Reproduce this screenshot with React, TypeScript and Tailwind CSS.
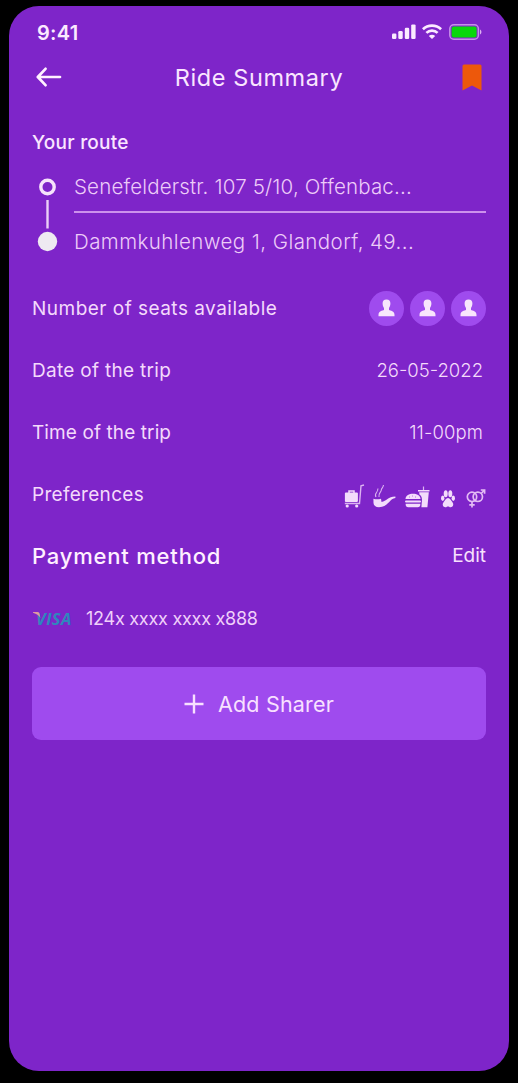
const StatusIcons = () => (
  <div className="flex items-center">
    <svg width="24" height="16" viewBox="0 0 24 16" fill="#fbeaff">
      <rect x="0" y="9.5" width="4.4" height="5.5" rx="1.2" />
      <rect x="6.3" y="7" width="4.4" height="8" rx="1.2" />
      <rect x="12.8" y="3.7" width="4.4" height="11.3" rx="1.2" />
      <rect x="19.2" y="0.4" width="4.4" height="14.6" rx="1.2" />
    </svg>
    <svg
      className="ml-[6px]"
      width="20"
      height="16"
      viewBox="0 0 20 16"
      fill="none"
      stroke="#fbeaff"
      strokeWidth="2.7"
    >
      <path d="M0.9 5.2C5.9 0.3 14.1 0.3 19.1 5.2" />
      <path d="M4.4 8.9C7.5 5.9 12.5 5.9 15.6 8.9" />
      <path
        d="M10 15L6.8 11.9C8.7 10.2 11.3 10.2 13.2 11.9Z"
        fill="#fbeaff"
        stroke="none"
      />
    </svg>
    <svg className="ml-[7px]" width="33" height="16" viewBox="0 0 33 16">
      <rect
        x="0.8"
        y="0.8"
        width="28.6"
        height="14.4"
        rx="4"
        fill="none"
        stroke="#c78fe9"
        strokeWidth="1.5"
      />
      <rect x="2.6" y="2.5" width="25" height="11" rx="2" fill="#08d70b" />
      <path d="M31 5.5C32.9 6.3 32.9 9.7 31 10.5Z" fill="#dcb0f2" />
    </svg>
  </div>
);

const Person = () => (
  <div className="flex h-[35px] w-[35px] items-center justify-center rounded-full bg-[#9f4bee]">
    <svg width="17" height="18" viewBox="0 0 17 18" fill="#f8e6fc">
      <path d="M8.5 0.5C11.2 0.5 12.4 2 12.4 4.3C12.4 6.4 11.8 8 11 9V11C12.5 11.8 16.5 12 16.5 15.8V17.2H0.5V15.8C0.5 12 4.5 11.8 6 11V9C5.2 8 4.6 6.4 4.6 4.3C4.6 2 5.8 0.5 8.5 0.5Z" />
    </svg>
  </div>
);

const Luggage = () => (
  <svg width="21" height="24" viewBox="0 0 21 24" fill="#f3dcfb">
    <path
      d="M20 1L17 1.8L15.5 19.5H0.8"
      fill="none"
      stroke="#dcb2f1"
      strokeWidth="1.4"
    />
    <rect x="0.9" y="8.5" width="13" height="9.6" rx="1" />
    <path d="M5 9V7H10V9" fill="none" stroke="#f3dcfb" strokeWidth="1.5" />
    <circle cx="3.2" cy="22" r="1.6" />
    <circle cx="12.7" cy="22" r="1.6" />
  </svg>
);

const Pipe = () => (
  <svg width="23" height="24" viewBox="0 0 23 24" fill="#f3dcfb">
    <path d="M0.4 14.8Q4 15.8 8 14.8L8.5 18C13.5 17.5 15 12.6 22.4 12.6V14C17 14.5 16 21 9 22.8C4 24 0.6 22.3 0.5 19Z" />
    <path
      d="M3 13C0.5 9 5.8 8.5 4.8 4.5M6 13C5.2 9 8 8.5 8.3 6C8.5 4.2 10 4 10.5 1"
      fill="none"
      stroke="#dcb2f1"
      strokeWidth="1.1"
    />
  </svg>
);

const Burger = () => (
  <svg width="25" height="22" viewBox="0 0 25 22" fill="#f3dcfb">
    <path d="M0.5 13C0.5 6 15.5 6 15.5 13Z" />
    <rect x="0" y="14.4" width="16" height="2" rx="1" />
    <path d="M0.7 17.8H15.3V18.5C15.3 20.2 14.4 21.2 12.8 21.2H3.2C1.6 21.2 0.7 20.2 0.7 18.5Z" />
    <path d="M13 4H24.5V5.4H13ZM14.2 6.2H23.8L22.4 21.2H16.4L17 13.5C16.8 10.5 15.8 9.4 14.4 8.5Z" />
    <path d="M18.5 4V0.5" stroke="#dcb2f1" strokeWidth="1.2" />
    <path
      d="M4 11H5M7 10H8M10 11H11"
      stroke="#a75ad9"
      strokeWidth="0.8"
    />
  </svg>
);

const Paw = () => (
  <svg width="14" height="18" viewBox="0 0 14 18" fill="#f3dcfb">
    <ellipse cx="4.7" cy="3.7" rx="2" ry="3.5" />
    <ellipse cx="9.3" cy="3.7" rx="2" ry="3.5" />
    <ellipse cx="1.7" cy="8.2" rx="1.7" ry="2.8" />
    <ellipse cx="12.3" cy="8.2" rx="1.7" ry="2.8" />
    <path d="M7 8C9.2 8 10 10.4 11.3 12C13.3 14.4 11.9 17.3 9.5 17.2C8.4 17.1 8 16.4 7 16.4C6 16.4 5.6 17.1 4.5 17.2C2.1 17.3 0.7 14.4 2.7 12C4 10.4 4.8 8 7 8Z" />
  </svg>
);

const Genders = () => (
  <svg
    width="20"
    height="19"
    viewBox="0 0 20 19"
    fill="none"
    stroke="#e3bbf4"
    strokeWidth="1.7"
  >
    <circle cx="6" cy="7.8" r="4.7" />
    <circle cx="11.8" cy="7.8" r="4.7" />
    <path d="M15.2 4.5L18.5 1M14.8 1H18.6V4.8M6 12.5V18.5M3.3 15.8H8.7" />
  </svg>
);

const Visa = () => (
  <div className="relative h-[18px] w-[40px]">
    <span className="block pl-[4px] font-['Open_Sans'] text-[16.5px] leading-[19px] font-bold tracking-[0.4px] text-[#2f86bd] italic">
      VISA
    </span>
    <svg
      className="absolute top-[3px] left-[1px]"
      width="9"
      height="8"
      viewBox="0 0 9 8"
    >
      <path
        d="M0 0H4.5C6 0 6.3 0.8 6.6 2L7.4 6C6.2 3.4 3.5 1.7 0 0.7Z"
        fill="#e09a9f"
      />
    </svg>
  </div>
);

const App = () => {
  return (
    <div className="h-[1083px] w-[518px] bg-black px-[9px] pt-[6px] font-['Inter',sans-serif] whitespace-nowrap">
      <div className="flex h-[1065px] w-[500px] flex-col rounded-[30px] bg-[#7e25c9] px-[23px] text-[19px] text-[#f4dafb]">
        <div className="flex h-[52px] items-center justify-between pr-[4px] pl-[5px]">
          <span className="pt-[2px] text-[20px] font-semibold tracking-[0.3px] text-[#fbeaff]">
            9:41
          </span>
          <StatusIcons />
        </div>

        <div className="flex h-[38px] items-center justify-between px-[4px]">
          <svg
            width="26"
            height="20"
            viewBox="0 0 26 20"
            fill="none"
            stroke="#fff1ff"
            strokeWidth="2.7"
            strokeLinecap="round"
            strokeLinejoin="round"
          >
            <path d="M9.5 1.8L1.8 10L9.5 18.2M2 10H24" />
          </svg>
          <h1 className="-ml-[6px] pt-px text-[23.5px] tracking-[0.6px] text-[#fae6ff]">
            Ride Summary
          </h1>
          <svg width="20" height="27" viewBox="0 0 20 27" fill="#ed580b">
            <path d="M2 0.5H18Q19.5 0.5 19.5 2V26.5L10 21.5L0.5 26.5V2Q0.5 0.5 2 0.5Z" />
          </svg>
        </div>

        <h2 className="mt-[31px] h-[31px] leading-[31px] font-[450] tracking-[0.25px] text-[#fae6ff]">
          Your route
        </h2>

        <div className="mt-[2px] flex h-[102px]">
          <svg width="42" height="102" viewBox="0 0 42 102">
            <circle
              cx="15.5"
              cy="27"
              r="6.7"
              fill="none"
              stroke="#f6e3fb"
              strokeWidth="3.4"
            />
            <path d="M15.5 40V68.5" stroke="#eacff7" strokeWidth="2.4" />
            <circle cx="15.5" cy="81.5" r="9.7" fill="#eeeaf1" />
          </svg>
          <div className="flex-1 text-[20.5px] font-[350] text-[#edccf8]">
            <p className="mt-[9px] h-[42px] leading-[36px] tracking-[0.17px]">
              Senefelderstr. 107 5/10, Offenbac...
            </p>
            <div className="h-[2px] bg-[#cc91ec]" />
            <p className="mt-[11px] leading-[36px] tracking-[0.43px]">
              Dammkuhlenweg 1, Glandorf, 49...
            </p>
          </div>
        </div>

        <div className="mt-[15px] flex h-[62px] items-center justify-between">
          <span className="pt-[2px] tracking-[0.48px]">
            Number of seats available
          </span>
          <div className="flex gap-[6px]">
            <Person />
            <Person />
            <Person />
          </div>
        </div>

        <div className="mt-px flex h-[62px] items-center justify-between pr-[3px]">
          <span className="tracking-[0.3px]">Date of the trip</span>
          <span className="text-[18.5px] font-[350]">26-05-2022</span>
        </div>

        <div className="flex h-[62px] items-center justify-between pr-[3px]">
          <span className="tracking-[0.1px]">Time of the trip</span>
          <span className="text-[18.5px] font-[350] tracking-[0.1px]">
            11-00pm
          </span>
        </div>

        <div className="flex h-[62px] items-center justify-between">
          <span className="tracking-[0.3px]">Preferences</span>
          <div className="flex items-end pt-[2px]">
            <Luggage />
            <div className="ml-[8px]">
              <Pipe />
            </div>
            <div className="ml-[9px]">
              <Burger />
            </div>
            <div className="ml-[11px]">
              <Paw />
            </div>
            <div className="ml-[11px]">
              <Genders />
            </div>
          </div>
        </div>

        <div className="flex h-[60px] items-center justify-between">
          <h2 className="text-[22px] font-medium tracking-[0.8px] text-[#fff0ff]">
            Payment method
          </h2>
          <span className="text-[#f8e0fd]">Edit</span>
        </div>

        <div className="flex h-[64px] items-center">
          <Visa />
          <span className="ml-[14px] text-[18px] tracking-[-0.25px] text-[#f0d0fa]">
            124x xxxx xxxx x888
          </span>
        </div>

        <button className="mt-[17px] flex h-[73px] items-center justify-center gap-[14px] rounded-[9px] bg-[#9f4bee]">
          <svg
            width="20"
            height="20"
            viewBox="0 0 20 20"
            stroke="#f8e0ff"
            strokeWidth="2.4"
          >
            <path d="M10 0.5V19.5M0.5 10H19.5" />
          </svg>
          <span className="pt-px text-[21.5px] tracking-[0.2px] text-[#f8e0ff]">
            Add Sharer
          </span>
        </button>
      </div>
    </div>
  );
};

export default App;
